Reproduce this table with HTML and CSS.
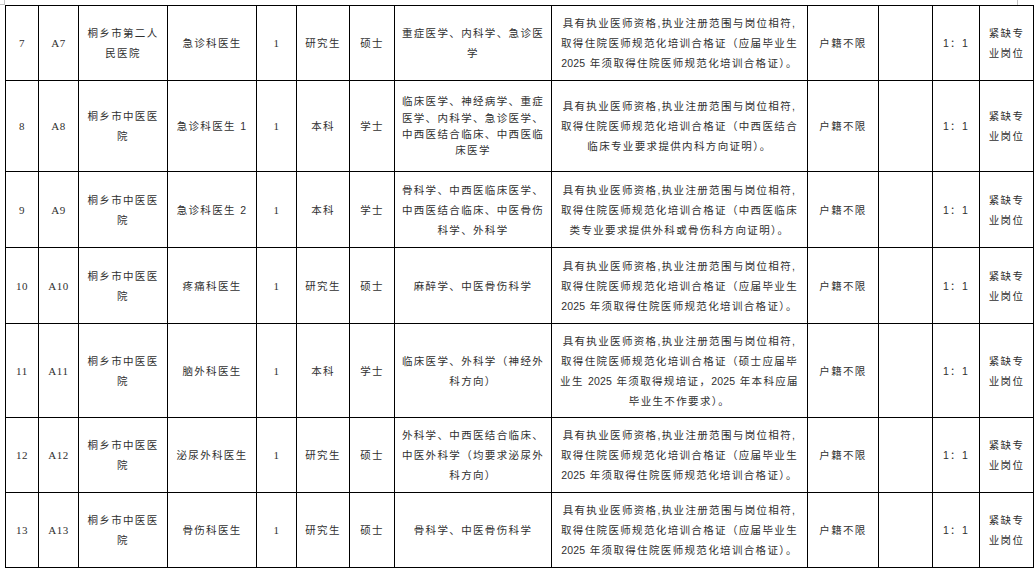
FILE: index.html
```html
<!DOCTYPE html>
<html lang="zh-CN">
<head>
<meta charset="utf-8">
<title>岗位表</title>
<link rel="stylesheet" href="styles.css">
</head>
<body>
<div class="page">
  <div class="mark mark-tl"></div>
  <div class="mark mark-tr"></div>
  <table class="grid">
    <colgroup>
      <col class="c1"><col class="c2"><col class="c3"><col class="c4"><col class="c5"><col class="c6"><col class="c7"><col class="c8"><col class="c9"><col class="c10"><col class="c11"><col class="c12"><col class="c13">
    </colgroup>
    <tbody>
      <tr class="h75">
        <td class="serif">7</td>
        <td class="serif">A7</td>
        <td>桐乡市第二人<br>民医院</td>
        <td>急诊科医生</td>
        <td class="serif">1</td>
        <td>研究生</td>
        <td>硕士</td>
        <td>重症医学、内科学、急诊医<br>学</td>
        <td class="req">具有执业医师资格,执业注册范围与岗位相符,<br>取得住院医师规范化培训合格证（应届毕业生<br><span class="num">2025</span> 年须取得住院医师规范化培训合格证）。</td>
        <td>户籍不限</td>
        <td></td>
        <td>1：1</td>
        <td>紧缺专<br>业岗位</td>
      </tr>
      <tr class="h91">
        <td class="serif">8</td>
        <td class="serif">A8</td>
        <td>桐乡市中医医<br>院</td>
        <td>急诊科医生 1</td>
        <td class="serif">1</td>
        <td>本科</td>
        <td>学士</td>
        <td class="tight">临床医学、神经病学、重症<br>医学、内科学、急诊医学、<br>中西医结合临床、中西医临<br>床医学</td>
        <td class="req">具有执业医师资格,执业注册范围与岗位相符,<br>取得住院医师规范化培训合格证（中西医结合<br>临床专业要求提供内科方向证明）。</td>
        <td>户籍不限</td>
        <td></td>
        <td>1：1</td>
        <td>紧缺专<br>业岗位</td>
      </tr>
      <tr class="h76">
        <td class="serif">9</td>
        <td class="serif">A9</td>
        <td>桐乡市中医医<br>院</td>
        <td>急诊科医生 2</td>
        <td class="serif">1</td>
        <td>本科</td>
        <td>学士</td>
        <td>骨科学、中西医临床医学、<br>中西医结合临床、中医骨伤<br>科学、外科学</td>
        <td class="req">具有执业医师资格,执业注册范围与岗位相符,<br>取得住院医师规范化培训合格证（中西医临床<br>类专业要求提供外科或骨伤科方向证明）。</td>
        <td>户籍不限</td>
        <td></td>
        <td>1：1</td>
        <td>紧缺专<br>业岗位</td>
      </tr>
      <tr class="h76">
        <td class="serif">10</td>
        <td class="serif">A10</td>
        <td>桐乡市中医医<br>院</td>
        <td>疼痛科医生</td>
        <td class="serif">1</td>
        <td>研究生</td>
        <td>硕士</td>
        <td>麻醉学、中医骨伤科学</td>
        <td class="req">具有执业医师资格,执业注册范围与岗位相符,<br>取得住院医师规范化培训合格证（应届毕业生<br><span class="num">2025</span> 年须取得住院医师规范化培训合格证）。</td>
        <td>户籍不限</td>
        <td></td>
        <td>1：1</td>
        <td>紧缺专<br>业岗位</td>
      </tr>
      <tr class="h94">
        <td class="serif">11</td>
        <td class="serif">A11</td>
        <td>桐乡市中医医<br>院</td>
        <td>脑外科医生</td>
        <td class="serif">1</td>
        <td>本科</td>
        <td>学士</td>
        <td>临床医学、外科学（神经外<br>科方向）</td>
        <td class="req">具有执业医师资格,执业注册范围与岗位相符,<br>取得住院医师规范化培训合格证（硕士应届毕<br>业生 <span class="num">2025</span> 年须取得规培证，<span class="num">2025</span> 年本科应届<br>毕业生不作要求）。</td>
        <td>户籍不限</td>
        <td></td>
        <td>1：1</td>
        <td>紧缺专<br>业岗位</td>
      </tr>
      <tr class="h75">
        <td class="serif">12</td>
        <td class="serif">A12</td>
        <td>桐乡市中医医<br>院</td>
        <td>泌尿外科医生</td>
        <td class="serif">1</td>
        <td>研究生</td>
        <td>硕士</td>
        <td>外科学、中西医结合临床、<br>中医外科学（均要求泌尿外<br>科方向）</td>
        <td class="req">具有执业医师资格,执业注册范围与岗位相符,<br>取得住院医师规范化培训合格证（应届毕业生<br><span class="num">2025</span> 年须取得住院医师规范化培训合格证）。</td>
        <td>户籍不限</td>
        <td></td>
        <td>1：1</td>
        <td>紧缺专<br>业岗位</td>
      </tr>
      <tr class="h75">
        <td class="serif">13</td>
        <td class="serif">A13</td>
        <td>桐乡市中医医<br>院</td>
        <td>骨伤科医生</td>
        <td class="serif">1</td>
        <td>研究生</td>
        <td>硕士</td>
        <td>骨科学、中医骨伤科学</td>
        <td class="req">具有执业医师资格,执业注册范围与岗位相符,<br>取得住院医师规范化培训合格证（应届毕业生<br><span class="num">2025</span> 年须取得住院医师规范化培训合格证）。</td>
        <td>户籍不限</td>
        <td></td>
        <td>1：1</td>
        <td>紧缺专<br>业岗位</td>
      </tr>
    </tbody>
  </table>
</div>
</body>
</html>
```

FILE: styles.css
```css
html, body {
  margin: 0;
  padding: 0;
  background: #ffffff;
}

.page {
  position: relative;
  padding: 5px 0 0 5px;
  width: 1036px;
  height: 570px;
  box-sizing: border-box;
  overflow: hidden;
}

.mark {
  position: absolute;
  border-color: #c4c4c4;
  border-style: solid;
  border-width: 0;
}

.mark-tl {
  left: 0;
  top: 0;
  width: 4px;
  height: 4px;
  border-right-width: 1px;
  border-bottom-width: 1px;
}

.mark-tr {
  left: 1017px;
  top: 0;
  width: 0;
  height: 5px;
  border-left-width: 1px;
}

.grid {
  border-collapse: collapse;
  table-layout: fixed;
  width: 1029px;
  font-family: "Liberation Sans", "Noto Sans CJK SC", sans-serif;
  font-size: 10.5px;
  letter-spacing: 1.35px;
  color: #303030;
}

.grid td {
  border: 1px solid #000000;
  padding: 0 4px;
  text-align: center;
  vertical-align: middle;
  line-height: 20px;
  white-space: nowrap;
  overflow: hidden;
}

.c1 { width: 33px; }
.c2 { width: 40px; }
.c3 { width: 89px; }
.c4 { width: 89px; }
.c5 { width: 40px; }
.c6 { width: 53px; }
.c7 { width: 45px; }
.c8 { width: 157px; }
.c9 { width: 256px; }
.c10 { width: 71px; }
.c11 { width: 54px; }
.c12 { width: 47px; }
.c13 { width: 54px; }

.h75 { height: 75px; }
.h76 { height: 76px; }
.h91 { height: 91px; }
.h94 { height: 94px; }

.grid td.serif {
  font-family: "Liberation Serif", "Noto Sans CJK SC", serif;
  font-size: 11px;
  letter-spacing: 0.6px;
}

.grid td.tight {
  line-height: 16.4px;
}

.num {
  letter-spacing: 0.2px;
}
```
